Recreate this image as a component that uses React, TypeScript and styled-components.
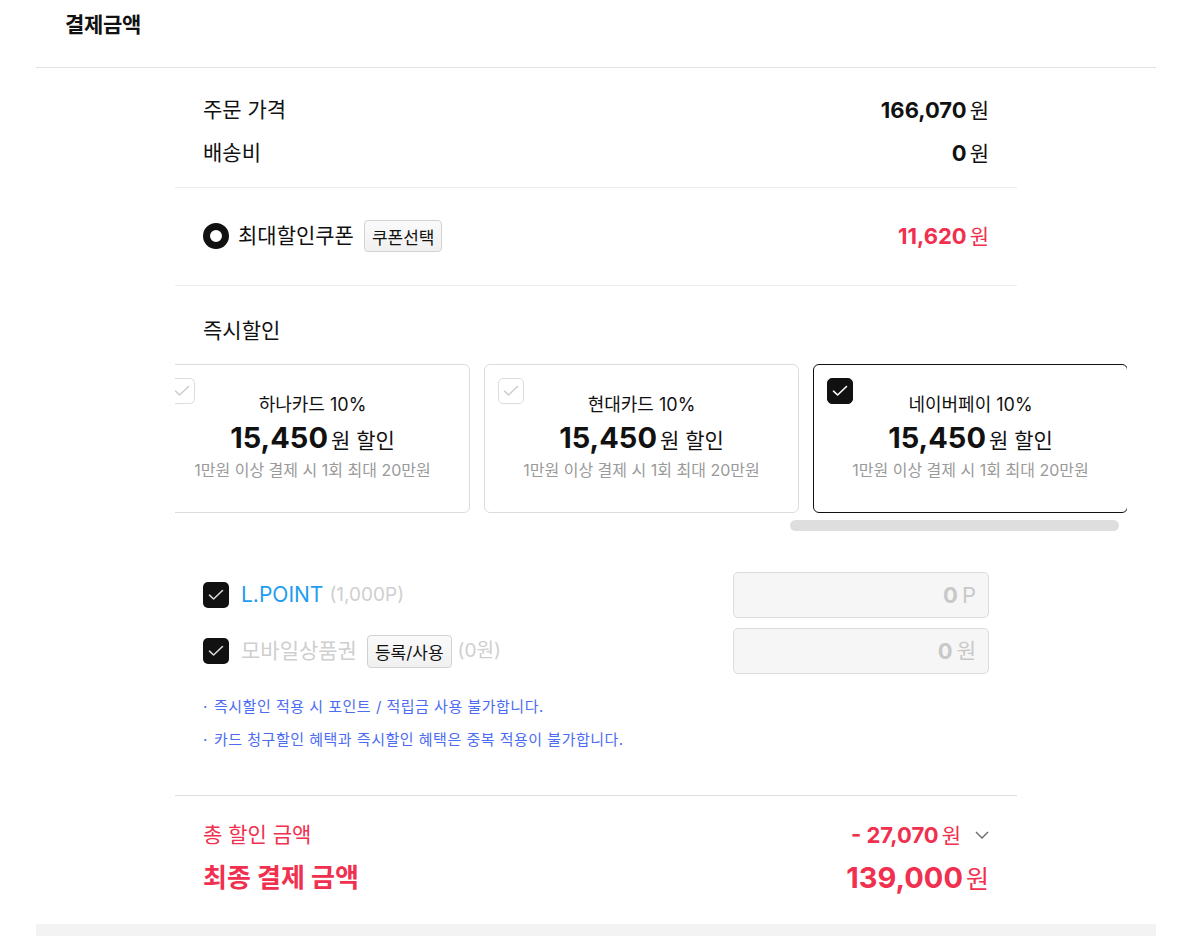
import React, { useLayoutEffect, useRef, useState } from "react";
import styled, { createGlobalStyle } from "styled-components";

const RED = "#f0304e";

const GlobalStyle = createGlobalStyle`
  html, body { margin: 0; padding: 0; background: #fff; }
  body {
    font-family: Inter, "Noto Sans CJK KR", sans-serif;
    color: #111;
  }
  * { box-sizing: border-box; }
`;

const Page = styled.div`
  margin: 0 36px;
  width: 1120px;
`;

const Header = styled.header`
  height: 68px;
  padding: 10px 0 0 29px;
  border-bottom: 1px solid #e2e2e2;
  font-size: 21px;
  font-weight: 700;
  line-height: 30px;
  letter-spacing: -0.3px;
`;

const Column = styled.div`
  margin-left: 139px;
  width: 842px;
`;

const PriceSection = styled.section`
  padding: 25px 28px 17px;
  border-bottom: 1px solid #ececec;
  display: flex;
  flex-direction: column;
  gap: 9px;
`;

const Row = styled.div<{ $h?: number }>`
  display: flex;
  align-items: center;
  justify-content: space-between;
  height: ${(p) => p.$h ?? 34}px;
`;

const Label = styled.span<{ $color?: string; $size?: number; $weight?: number }>`
  font-size: ${(p) => p.$size ?? 21}px;
  font-weight: ${(p) => p.$weight ?? 400};
  color: ${(p) => p.$color ?? "#111"};
  line-height: 1.3;
`;

const Amount = styled.span<{ $color?: string }>`
  display: inline-flex;
  align-items: baseline;
  gap: 3px;
  color: ${(p) => p.$color ?? "#111"};
`;

const Num = styled.b<{ $size?: number }>`
  font-size: ${(p) => p.$size ?? 22}px;
  font-weight: 700;
  line-height: 1.2;
`;

const Unit = styled.span<{ $size?: number }>`
  font-size: ${(p) => p.$size ?? 21}px;
  font-weight: 400;
  line-height: 1.2;
`;

const CouponSection = styled.section`
  padding: 32px 28px 33px;
  border-bottom: 1px solid #ececec;
`;

const LeftGroup = styled.div`
  display: flex;
  align-items: center;
`;

const Radio = styled.span`
  width: 26px;
  height: 26px;
  border-radius: 50%;
  border: 7px solid #111;
  background: #fff;
  margin-right: 9px;
`;

const SmallButton = styled.button<{ $h?: number }>`
  height: ${(p) => p.$h ?? 32}px;
  padding: 0 7px;
  margin-left: 10px;
  border: 1px solid #d2d2d2;
  border-radius: 4px;
  background: linear-gradient(#fafafa, #f0f0f0);
  font-family: Inter, "Noto Sans CJK KR", sans-serif;
  font-size: 17px;
  color: #111;
`;

const DiscountBlock = styled.section`
  border-bottom: 1px solid #dedede;
  padding-bottom: 39px;
`;

const SectionTitle = styled.h3`
  margin: 0;
  padding: 30px 28px 0;
  font-size: 21px;
  font-weight: 400;
  line-height: 30px;
`;

const CardViewport = styled.div`
  margin-top: 18px;
  width: 952px;
  overflow: hidden;
`;

const CardRow = styled.div`
  display: flex;
  gap: 14px;
  width: max-content;
`;

const Card = styled.div<{ $selected?: boolean }>`
  position: relative;
  width: 315px;
  height: 149px;
  padding-top: 28px;
  border: 1px solid ${(p) => (p.$selected ? "#111" : "#dcdcdc")};
  border-radius: 6px;
  display: flex;
  flex-direction: column;
  align-items: center;
  background: #fff;
`;

const CardCheck = styled.span<{ $checked?: boolean }>`
  position: absolute;
  top: 13px;
  left: 13px;
  width: 26px;
  height: 26px;
  border-radius: 5px;
  border: 1px solid ${(p) => (p.$checked ? "#111" : "#dcdcdc")};
  background: ${(p) => (p.$checked ? "#111" : "#fff")};
  display: flex;
  align-items: center;
  justify-content: center;
`;

const CardTitle = styled.div`
  font-size: 18px;
  line-height: 24px;
  color: #111;
`;

const CardAmount = styled.div`
  margin-top: 3px;
  height: 36px;
  display: flex;
  align-items: baseline;
  gap: 3px;
`;

const CardNum = styled.b`
  font-size: 29px;
  font-weight: 700;
  line-height: 36px;
`;

const CardUnit = styled.span`
  font-size: 21px;
  line-height: 36px;
`;

const CardSub = styled.div`
  margin-top: 3px;
  font-size: 16px;
  line-height: 22px;
  color: #9a9a9a;
`;

const ScrollTrack = styled.div`
  margin: 7px 0 0 39px;
  width: 905px;
  height: 11px;
  position: relative;
`;

const ScrollThumb = styled.div`
  position: absolute;
  top: 0;
  height: 11px;
  border-radius: 6px;
  background: #dedede;
`;

const PointList = styled.div`
  margin-top: 41px;
  padding: 0 28px;
  display: flex;
  flex-direction: column;
  gap: 10px;
`;

const Check = styled.span`
  width: 26px;
  height: 26px;
  border-radius: 5px;
  background: #111;
  display: flex;
  align-items: center;
  justify-content: center;
  margin-right: 12px;
`;

const Muted = styled.span<{ $size?: number; $ml?: number }>`
  font-size: ${(p) => p.$size ?? 19}px;
  color: #cfcfcf;
  margin-left: ${(p) => p.$ml ?? 0}px;
  line-height: 1.3;
`;

const PointInput = styled.div`
  width: 256px;
  height: 46px;
  border: 1px solid #dcdcdc;
  border-radius: 5px;
  background: #f6f6f6;
  display: flex;
  align-items: center;
  justify-content: flex-end;
  gap: 4px;
  padding-right: 12px;
  color: #c8c8c8;
`;

const Notes = styled.ul`
  list-style: none;
  margin: 0;
  padding: 16px 28px 0;
`;

const Note = styled.li`
  font-size: 15px;
  line-height: 33px;
  color: #4c6cf2;
  letter-spacing: 0.5px;
  &::before {
    content: "·";
    display: inline-block;
    width: 11px;
  }
`;

const TotalSection = styled.section`
  padding: 24px 28px 26px;
  display: flex;
  flex-direction: column;
  gap: 8px;
`;

const RightGroup = styled.div`
  display: flex;
  align-items: center;
`;

const Chevron = styled.svg`
  margin-left: 14px;
`;

const Footer = styled.div`
  height: 12px;
  background: #f3f3f3;
`;

const CheckMark = ({ color }: { color: string }) => (
  <svg width="16" height="12" viewBox="0 0 16 12" fill="none">
    <path d="M1.5 6.2 L5.6 10 L14.5 1.5" stroke={color} strokeWidth="1.6" strokeLinecap="round" strokeLinejoin="round" />
  </svg>
);

const cards = [
  { name: "신한카드 10%", selected: false },
  { name: "삼성카드 10%", selected: false },
  { name: "KB국민카드 10%", selected: false },
  { name: "롯데카드 10%", selected: false },
  { name: "우리카드 10%", selected: false },
  { name: "하나카드 10%", selected: false },
  { name: "현대카드 10%", selected: false },
  { name: "네이버페이 10%", selected: true },
];

function CardScroller() {
  const ref = useRef<HTMLDivElement>(null);
  const [thumb, setThumb] = useState({ w: 0, l: 0 });

  useLayoutEffect(() => {
    const el = ref.current;
    if (!el) return;
    const max = el.scrollWidth - el.clientWidth;
    el.scrollLeft = max - 1;
    const track = 905;
    const w = (track * el.clientWidth) / el.scrollWidth;
    const l = max > 0 ? ((track - w) * el.scrollLeft) / max : 0;
    setThumb({ w, l });
  }, []);

  return (
    <>
      <CardViewport ref={ref}>
        <CardRow>
          {cards.map((c) => (
            <Card key={c.name} $selected={c.selected}>
              <CardCheck $checked={c.selected}>
                <CheckMark color={c.selected ? "#fff" : "#cfcfcf"} />
              </CardCheck>
              <CardTitle>{c.name}</CardTitle>
              <CardAmount>
                <CardNum>15,450</CardNum>
                <CardUnit>원 할인</CardUnit>
              </CardAmount>
              <CardSub>1만원 이상 결제 시 1회 최대 20만원</CardSub>
            </Card>
          ))}
        </CardRow>
      </CardViewport>
      <ScrollTrack>
        <ScrollThumb style={{ width: thumb.w, left: thumb.l }} />
      </ScrollTrack>
    </>
  );
}

export default function App() {
  return (
    <>
      <GlobalStyle />
      <Page>
        <Header>결제금액</Header>
        <Column>
          <PriceSection>
            <Row>
              <Label>주문 가격</Label>
              <Amount>
                <Num>166,070</Num>
                <Unit>원</Unit>
              </Amount>
            </Row>
            <Row>
              <Label>배송비</Label>
              <Amount>
                <Num>0</Num>
                <Unit>원</Unit>
              </Amount>
            </Row>
          </PriceSection>

          <CouponSection>
            <Row $h={32}>
              <LeftGroup>
                <Radio />
                <Label>최대할인쿠폰</Label>
                <SmallButton>쿠폰선택</SmallButton>
              </LeftGroup>
              <Amount $color={RED}>
                <Num>11,620</Num>
                <Unit>원</Unit>
              </Amount>
            </Row>
          </CouponSection>

          <DiscountBlock>
            <SectionTitle>즉시할인</SectionTitle>
            <CardScroller />

            <PointList>
              <Row $h={46}>
                <LeftGroup>
                  <Check>
                    <CheckMark color="#d8d8d8" />
                  </Check>
                  <Label $color="#1e9cf0">L.POINT</Label>
                  <Muted $ml={6}>(1,000P)</Muted>
                </LeftGroup>
                <PointInput>
                  <Num>0</Num>
                  <Unit $size={22}>P</Unit>
                </PointInput>
              </Row>
              <Row $h={46}>
                <LeftGroup>
                  <Check>
                    <CheckMark color="#d8d8d8" />
                  </Check>
                  <Muted $size={21}>모바일상품권</Muted>
                  <SmallButton $h={33}>등록/사용</SmallButton>
                  <Muted $ml={6}>(0원)</Muted>
                </LeftGroup>
                <PointInput>
                  <Num>0</Num>
                  <Unit>원</Unit>
                </PointInput>
              </Row>
            </PointList>

            <Notes>
              <Note>즉시할인 적용 시 포인트 / 적립금 사용 불가합니다.</Note>
              <Note>카드 청구할인 혜택과 즉시할인 혜택은 중복 적용이 불가합니다.</Note>
            </Notes>
          </DiscountBlock>

          <TotalSection>
            <Row $h={30}>
              <Label $color={RED} $size={21}>총 할인 금액</Label>
              <RightGroup>
                <Amount $color={RED}>
                  <Num>- 27,070</Num>
                  <Unit>원</Unit>
                </Amount>
                <Chevron width="14" height="8" viewBox="0 0 14 8" fill="none">
                  <path d="M1 1 L7 7 L13 1" stroke="#666" strokeWidth="1.3" />
                </Chevron>
              </RightGroup>
            </Row>
            <Row $h={40}>
              <Label $color={RED} $size={26} $weight={700}>최종 결제 금액</Label>
              <Amount $color={RED}>
                <Num $size={29}>139,000</Num>
                <Unit $size={25}>원</Unit>
              </Amount>
            </Row>
          </TotalSection>
        </Column>
        <Footer />
      </Page>
    </>
  );
}
